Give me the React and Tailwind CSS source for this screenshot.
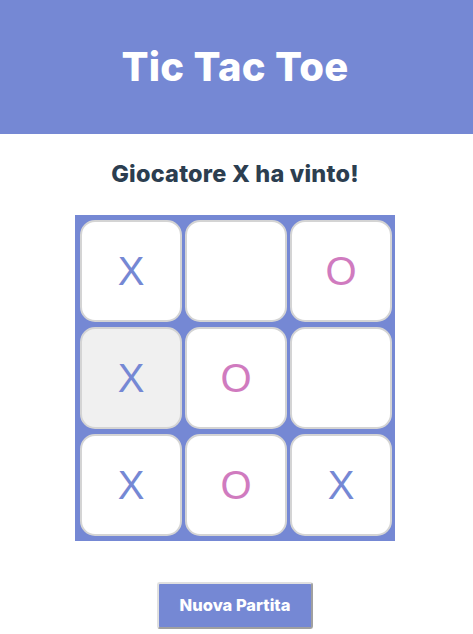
import React from "react";

const cells = ["X", "", "O", "X", "O", "", "X", "O", "X"];

export default function App() {
  return (
    <div className="w-[473px] h-[634px] bg-white overflow-hidden" style={{ fontFamily: "Inter, 'Noto Sans', sans-serif" }}>
      <header className="h-[134px] bg-[#7588d4] flex items-center justify-center pr-[3px]">
        <h1 className="text-white text-[40px] font-extrabold tracking-[0.3px] leading-none">Tic Tac Toe</h1>
      </header>
      <div className="w-[470px] flex flex-col items-center">
        <h2 className="mt-[27px] h-[26px] flex items-center text-[23.5px] font-extrabold text-[#2c3e50] leading-none tracking-[0.2px]">Giocatore X ha vinto!</h2>
        <div className="mt-[28px] w-[320px] bg-[#7588d4] pl-[5px] pr-[3px] py-[5px] grid grid-cols-[102px_102px_102px] gap-x-[3px] gap-y-[5px]">
          {cells.map((c, i) => (
            <div
              key={i}
              className={`w-[102px] h-[102px] rounded-[15px] border-2 border-[#d4d4d4] flex items-center justify-center text-[40px] leading-none ${i === 3 ? "bg-[#f0f0f0]" : "bg-white"} ${c === "X" ? "text-[#7588d4]" : "text-[#d07bbf]"}`}
              style={{ fontFamily: "'Liberation Sans', Arial, sans-serif" }}
            >
              {c}
            </div>
          ))}
        </div>
        <button className="mt-[41px] w-[156px] h-[47px] bg-[#7588d4] text-white text-[16.5px] font-extrabold rounded-[3px] border-2 border-t-[#e0e0e0] border-l-[#e0e0e0] border-r-[#a0a0a0] border-b-[#a0a0a0]">
          Nuova Partita
        </button>
      </div>
    </div>
  );
}
